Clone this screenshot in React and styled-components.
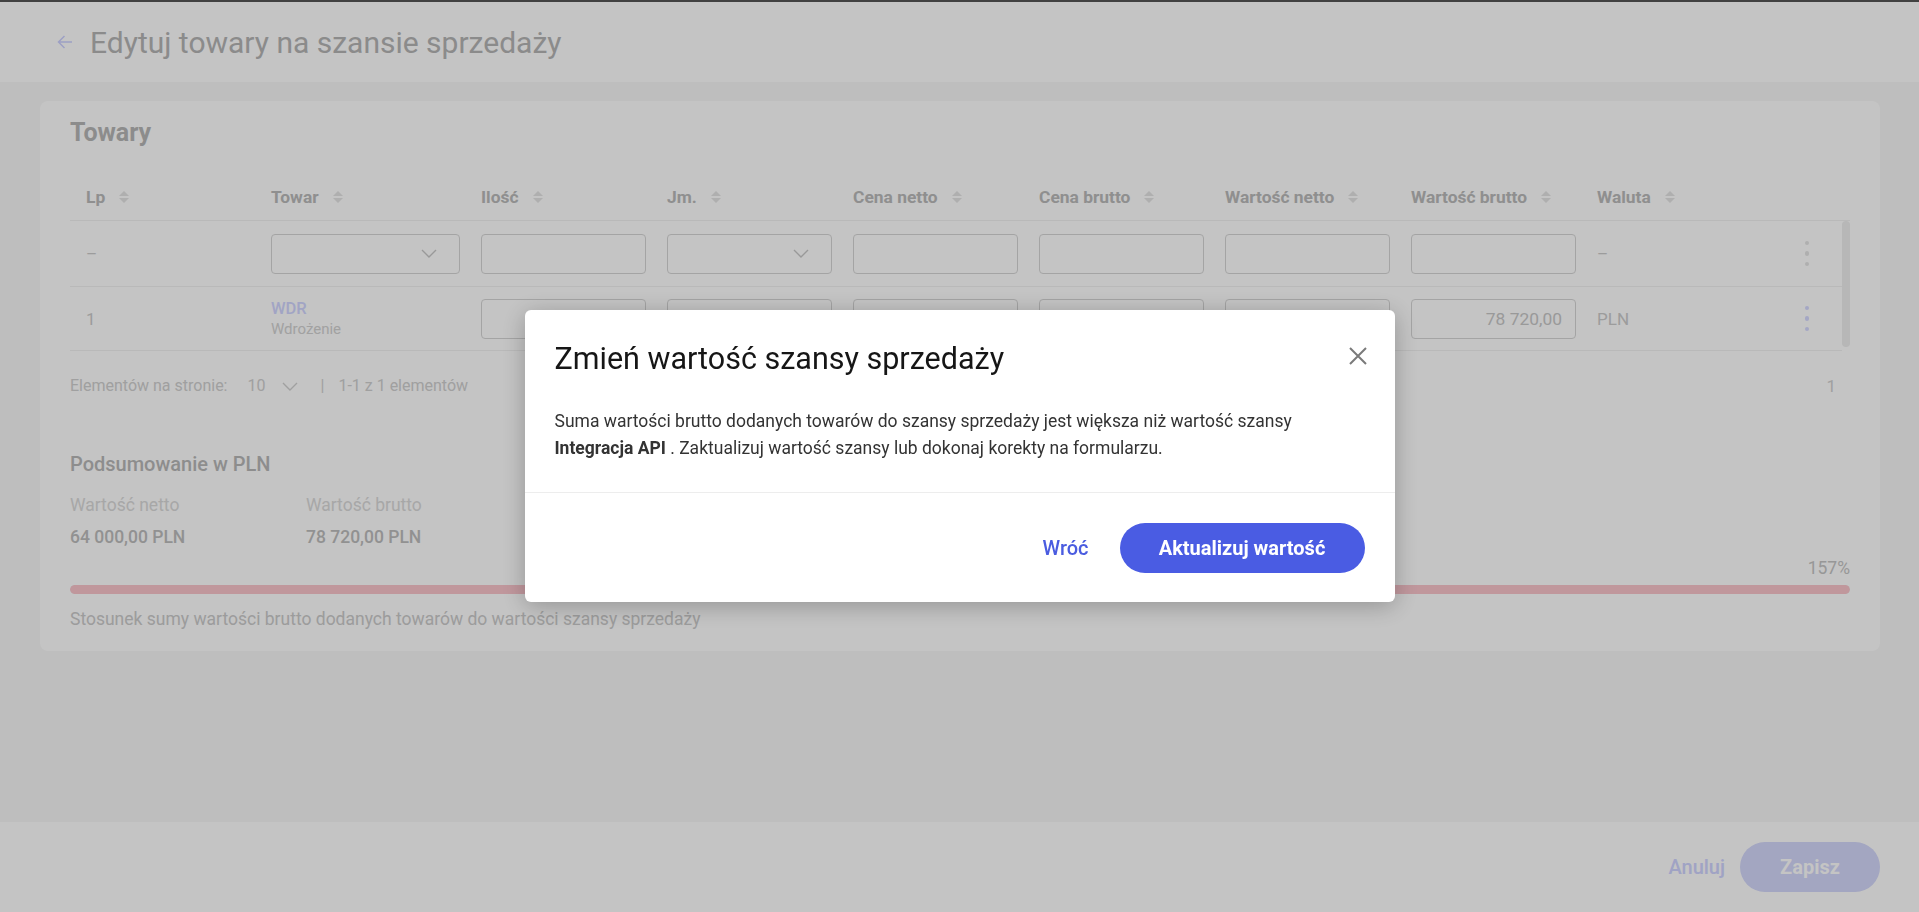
import React from "react";
import styled, { createGlobalStyle } from "styled-components";

const GlobalStyle = createGlobalStyle`
  * { box-sizing: border-box; }
  html, body { margin: 0; padding: 0; }
  body {
    font-family: Roboto, "Liberation Sans", Arial, sans-serif;
    background: #ffffff;
  }
`;

const columns = [
  "Lp",
  "Towar",
  "Ilość",
  "Jm.",
  "Cena netto",
  "Cena brutto",
  "Wartość netto",
  "Wartość brutto",
  "Waluta",
];

function SortIcon() {
  return (
    <svg width="12" height="14" viewBox="0 0 12 14" fill="#e4e4e4">
      <path d="M6 1 L11 6 H1 Z" />
      <path d="M6 13 L1 8 H11 Z" />
    </svg>
  );
}

function Chevron({ color = "#c8c8c8" }) {
  return (
    <svg width="16" height="9" viewBox="0 0 16 9" fill="none">
      <path d="M1 1 L8 8 L15 1" stroke={color} strokeWidth="1.4" />
    </svg>
  );
}

function BackArrow() {
  return (
    <svg width="16" height="14" viewBox="0 0 16 14" fill="none">
      <path
        d="M15 7 H1.5 M7.5 1 L1.5 7 L7.5 13"
        stroke="#cdd1ff"
        strokeWidth="1.5"
      />
    </svg>
  );
}

function CloseIcon() {
  return (
    <svg width="18" height="18" viewBox="0 0 18 18" fill="none">
      <path d="M1 1 L17 17 M17 1 L1 17" stroke="#7a7a7a" strokeWidth="2" />
    </svg>
  );
}

function Kebab({ active }) {
  return (
    <KebabWrap $active={active}>
      <span />
      <span />
      <span />
    </KebabWrap>
  );
}

export default function App() {
  return (
    <>
      <GlobalStyle />
      <Page>
        <TopBar>
          <BackArrow />
          <PageTitle>Edytuj towary na szansie sprzedaży</PageTitle>
        </TopBar>

        <Main>
          <Card>
            <CardTitle>Towary</CardTitle>

            <HeaderRow>
              {columns.map((c) => (
                <HeadCell key={c}>
                  {c}
                  <SortIcon />
                </HeadCell>
              ))}
            </HeaderRow>

            <Body>
              <Rows>
                <Row $h={66}>
                  <Cell>–</Cell>
                  <Cell>
                    <Field $select>
                      <Chevron />
                    </Field>
                  </Cell>
                  <Cell>
                    <Field />
                  </Cell>
                  <Cell>
                    <Field $select>
                      <Chevron />
                    </Field>
                  </Cell>
                  <Cell>
                    <Field />
                  </Cell>
                  <Cell>
                    <Field />
                  </Cell>
                  <Cell>
                    <Field />
                  </Cell>
                  <Cell>
                    <Field />
                  </Cell>
                  <Cell>–</Cell>
                  <Cell>
                    <Kebab />
                  </Cell>
                </Row>
                <Row $h={64}>
                  <Cell>1</Cell>
                  <Cell>
                    <Product>
                      <ProductCode>WDR</ProductCode>
                      <ProductName>Wdrożenie</ProductName>
                    </Product>
                  </Cell>
                  <Cell>
                    <Field>1,00</Field>
                  </Cell>
                  <Cell>
                    <Field $select>
                      <Chevron />
                    </Field>
                  </Cell>
                  <Cell>
                    <Field>64 000,00</Field>
                  </Cell>
                  <Cell>
                    <Field>78 720,00</Field>
                  </Cell>
                  <Cell>
                    <Field>64 000,00</Field>
                  </Cell>
                  <Cell>
                    <Field>78 720,00</Field>
                  </Cell>
                  <Cell>PLN</Cell>
                  <Cell>
                    <Kebab active />
                  </Cell>
                </Row>
              </Rows>
              <ScrollTrack>
                <ScrollThumb />
              </ScrollTrack>
            </Body>

            <Pagination>
              <PageInfo>
                <span>Elementów na stronie:</span>
                <PageSize>
                  10
                  <Chevron color="#d0d0d0" />
                </PageSize>
                <Divider>|</Divider>
                <span>1-1 z 1 elementów</span>
              </PageInfo>
              <PageNumber>1</PageNumber>
            </Pagination>

            <SummaryTitle>Podsumowanie w PLN</SummaryTitle>
            <SummaryGrid>
              <SummaryItem>
                <SummaryLabel>Wartość netto</SummaryLabel>
                <SummaryValue>64 000,00 PLN</SummaryValue>
              </SummaryItem>
              <SummaryItem>
                <SummaryLabel>Wartość brutto</SummaryLabel>
                <SummaryValue>78 720,00 PLN</SummaryValue>
              </SummaryItem>
            </SummaryGrid>

            <Percent>157%</Percent>
            <Bar>
              <BarFill style={{ width: "100%" }} />
            </Bar>
            <BarCaption>
              Stosunek sumy wartości brutto dodanych towarów do wartości szansy
              sprzedaży
            </BarCaption>
          </Card>
        </Main>

        <Footer>
          <TextButton $muted>Anuluj</TextButton>
          <PillButton $muted>Zapisz</PillButton>
        </Footer>
      </Page>

      <Overlay>
        <Modal>
          <ModalHeader>
            <ModalTitle>Zmień wartość szansy sprzedaży</ModalTitle>
            <CloseButton>
              <CloseIcon />
            </CloseButton>
          </ModalHeader>
          <ModalBody>
            Suma wartości brutto dodanych towarów do szansy sprzedaży jest
            większa niż wartość szansy <br />
            <strong>Integracja API</strong> . Zaktualizuj wartość szansy lub
            dokonaj korekty na formularzu.
          </ModalBody>
          <ModalFooter>
            <TextButton>Wróć</TextButton>
            <PillButton $wide>Aktualizuj wartość</PillButton>
          </ModalFooter>
        </Modal>
      </Overlay>
    </>
  );
}

const Page = styled.div`
  min-height: 100vh;
  display: flex;
  flex-direction: column;
  border-top: 2px solid #555;
`;

const TopBar = styled.header`
  height: 80px;
  display: flex;
  align-items: center;
  gap: 17px;
  padding-left: 57px;
  background: #fff;
`;

const PageTitle = styled.h1`
  margin: 0;
  font-size: 30px;
  font-weight: 400;
  color: #b5b5b5;
`;

const Main = styled.main`
  flex: 1;
  background: #f8f8f8;
  padding: 19px 39px 0 40px;
`;

const Card = styled.section`
  background: #fff;
  border-radius: 8px;
  padding: 16px 30px 21px;
`;

const CardTitle = styled.h2`
  margin: 0 0 24px;
  font-size: 25px;
  line-height: 32px;
  font-weight: 700;
  color: #b7b7b7;
`;

const grid = `
  display: grid;
  grid-template-columns: 185px 210px repeat(6, 186px) 1fr 40px;
  padding: 0 15px 0 16px;
  align-items: center;
`;

const HeaderRow = styled.div`
  ${grid};
  height: 48px;
  border-bottom: 1px solid #f1f1f1;
`;

const HeadCell = styled.div`
  display: flex;
  align-items: center;
  gap: 13px;
  font-size: 17.4px;
  font-weight: 700;
  color: #bababa;
  white-space: nowrap;
`;

const Body = styled.div`
  display: flex;
`;

const Rows = styled.div`
  flex: 1;
`;

const Row = styled.div`
  ${grid};
  height: ${({ $h }) => $h}px;
  border-bottom: 1px solid #f1f1f1;
`;

const Cell = styled.div`
  font-size: 17px;
  color: #cbcbcb;
  display: flex;
  align-items: center;
`;

const Field = styled.div`
  width: calc(100% - 21px);
  height: 40px;
  border: 1px solid #d6d6d6;
  border-radius: 4px;
  background: #fff;
  display: flex;
  align-items: center;
  justify-content: flex-end;
  padding: 0 ${({ $select }) => ($select ? "22px" : "13px")};
  font-size: 17.4px;
  color: #c8c8c8;
`;

const Product = styled.div`
  display: flex;
  flex-direction: column;
`;

const ProductCode = styled.span`
  font-size: 16.5px;
  line-height: 21px;
  font-weight: 500;
  color: #d2d6ff;
`;

const ProductName = styled.span`
  font-size: 15px;
  line-height: 21px;
  color: #d2d2d2;
`;

const KebabWrap = styled.div`
  display: flex;
  flex-direction: column;
  align-items: center;
  gap: 6px;
  width: 100%;

  span {
    width: 4.5px;
    height: 4.5px;
    border-radius: 50%;
    background: ${({ $active }) => ($active ? "#d6daff" : "#e4e4e4")};
  }
`;

const ScrollTrack = styled.div`
  width: 8px;
`;

const ScrollThumb = styled.div`
  height: 126px;
  border-radius: 4px;
  background: #eeeeee;
`;

const Pagination = styled.div`
  display: flex;
  justify-content: space-between;
  align-items: center;
  margin-top: 25px;
  font-size: 16px;
  line-height: 20px;
  color: #d0d0d0;
`;

const PageInfo = styled.div`
  display: flex;
  align-items: center;
`;

const PageSize = styled.div`
  display: flex;
  align-items: center;
  gap: 17px;
  margin-left: 20px;
`;

const Divider = styled.span`
  margin: 0 14px 0 22px;
`;

const PageNumber = styled.span`
  font-size: 17px;
  padding-right: 14px;
`;

const SummaryTitle = styled.h3`
  margin: 54px 0 0;
  font-size: 20px;
  line-height: 28px;
  font-weight: 500;
  color: #b8b8b8;
`;

const SummaryGrid = styled.div`
  display: grid;
  grid-template-columns: 236px 236px;
  margin-top: 16px;
`;

const SummaryItem = styled.div`
  display: flex;
  flex-direction: column;
  gap: 10px;
`;

const SummaryLabel = styled.span`
  font-size: 17.5px;
  line-height: 22px;
  color: #dadada;
`;

const SummaryValue = styled.span`
  font-size: 17.5px;
  line-height: 22px;
  font-weight: 500;
  color: #bdbdbd;
`;

const Percent = styled.div`
  margin-top: 9px;
  text-align: right;
  font-size: 17.5px;
  line-height: 22px;
  color: #c5c5c5;
`;

const Bar = styled.div`
  margin-top: 6px;
  height: 9px;
  border-radius: 5px;
  background: #f3f3f3;
  overflow: hidden;
`;

const BarFill = styled.div`
  height: 100%;
  border-radius: 5px;
  background: #fac5cc;
`;

const BarCaption = styled.div`
  margin-top: 14px;
  font-size: 17.5px;
  line-height: 22px;
  color: #cbcbcb;
`;

const Footer = styled.footer`
  height: 90px;
  background: #fff;
  display: flex;
  align-items: center;
  justify-content: flex-end;
  gap: 15px;
  padding-right: 39px;
`;

const TextButton = styled.button`
  border: 0;
  background: none;
  padding: 0;
  font-family: inherit;
  font-size: 20px;
  font-weight: 500;
  color: ${({ $muted }) => ($muted ? "#d0d4ff" : "#4a5ce0")};
  cursor: pointer;
`;

const PillButton = styled.button`
  border: 0;
  height: 50px;
  width: ${({ $wide }) => ($wide ? "245px" : "140px")};
  border-radius: 25px;
  background: ${({ $muted }) => ($muted ? "#d4d8fb" : "#4a5ce3")};
  color: #fff;
  font-family: inherit;
  font-size: 20px;
  font-weight: 700;
  cursor: pointer;
`;

const Overlay = styled.div`
  position: fixed;
  inset: 0;
  background: rgba(0, 0, 0, 0.23);
  display: flex;
  align-items: center;
  justify-content: center;
`;

const Modal = styled.div`
  width: 870px;
  background: #fff;
  border-radius: 6px;
  box-shadow: 0 4px 24px rgba(0, 0, 0, 0.25);
  font-family: Roboto, "Liberation Sans", Arial, sans-serif;
`;

const ModalHeader = styled.div`
  display: flex;
  justify-content: space-between;
  align-items: center;
  padding: 31px 28px 0 30px;
`;

const ModalTitle = styled.h2`
  margin: 0;
  font-size: 30.5px;
  line-height: 36px;
  font-weight: 400;
  color: #161616;
`;

const CloseButton = styled.button`
  border: 0;
  background: none;
  padding: 0;
  display: flex;
  margin-top: -6px;
  cursor: pointer;
`;

const ModalBody = styled.p`
  margin: 0;
  padding: 31px 30px 30px;
  font-size: 17.5px;
  line-height: 27px;
  color: #333;
  border-bottom: 1px solid #ededed;

  strong {
    font-weight: 700;
  }
`;

const ModalFooter = styled.div`
  display: flex;
  justify-content: flex-end;
  align-items: center;
  gap: 31px;
  padding: 30px 30px 29px;
`;
